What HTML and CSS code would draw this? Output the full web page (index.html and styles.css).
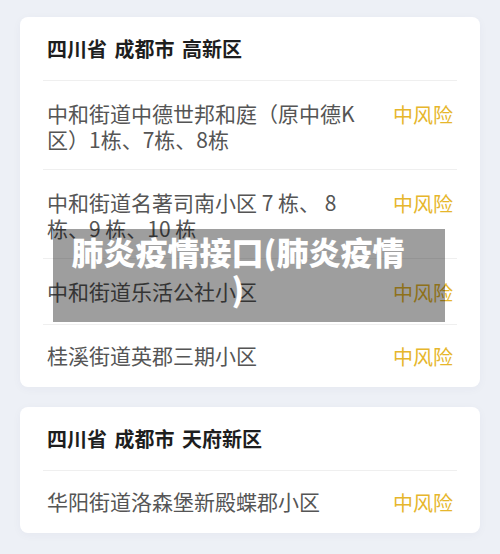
FILE: index.html
```html
<!DOCTYPE html>
<html lang="zh-CN">
<head>
<meta charset="utf-8">
<title>肺炎疫情接口</title>
<link rel="stylesheet" href="styles.css">
</head>
<body>
<main class="page">
  <section class="card">
    <div class="card-head">四川省 成都市 高新区</div>
    <div class="row">
      <div class="addr">中和街道中德世邦和庭（原中德K区）1栋、7栋、8栋</div>
      <div class="risk">中风险</div>
    </div>
    <div class="row">
      <div class="addr">中和街道名著司南小区 7 栋、 8 栋、9 栋、10 栋</div>
      <div class="risk">中风险</div>
    </div>
    <div class="row">
      <div class="addr">中和街道乐活公社小区</div>
      <div class="risk">中风险</div>
    </div>
    <div class="row row-last">
      <div class="addr">桂溪街道英郡三期小区</div>
      <div class="risk">中风险</div>
    </div>
  </section>
  <section class="card">
    <div class="card-head">四川省 成都市 天府新区</div>
    <div class="row row-last">
      <div class="addr">华阳街道洛森堡新殿蝶郡小区</div>
      <div class="risk">中风险</div>
    </div>
  </section>
</main>
<div class="caption">肺炎疫情接口(肺炎疫情<br>)</div>
</body>
</html>
```
FILE: styles.css
```css
html, body {
  margin: 0;
  padding: 0;
}
body {
  position: relative;
  background: #edf0f6;
  font-family: "Noto Sans CJK SC", "Noto Sans", sans-serif;
  width: 500px;
  height: 554px;
  overflow: hidden;
}
.page {
  padding: 17px 20px;
  display: flex;
  flex-direction: column;
  gap: 20px;
}
.card {
  background: #ffffff;
  border-radius: 8px;
  padding: 0 23px;
  box-shadow: 0 2px 10px rgba(40, 60, 100, 0.04);
}
.card-head {
  height: 63px;
  display: flex;
  align-items: center;
  padding: 0 4px;
  font-size: 20px;
  font-weight: 700;
  word-spacing: 3px;
  color: #1e1e1e;
}
.row {
  display: flex;
  align-items: flex-start;
  border-top: 1px solid #efefef;
  padding: 19px 4px 17px;
}
.row-last {
  padding-top: 17px;
  padding-bottom: 16px;
}
.addr {
  flex: 1;
  font-size: 21px;
  line-height: 26px;
  color: #555555;
}
.risk {
  margin-left: 36px;
  font-size: 20px;
  line-height: 29px;
  color: #e6b62c;
  white-space: nowrap;
}
.caption {
  position: absolute;
  left: 53px;
  top: 229px;
  width: 370px;
  height: 89px;
  padding: 4px 22px 0 0;
  background: rgba(0, 0, 0, 0.38);
  color: #ffffff;
  font-size: 32px;
  font-weight: 900;
  line-height: 37px;
  text-align: center;
}
```
